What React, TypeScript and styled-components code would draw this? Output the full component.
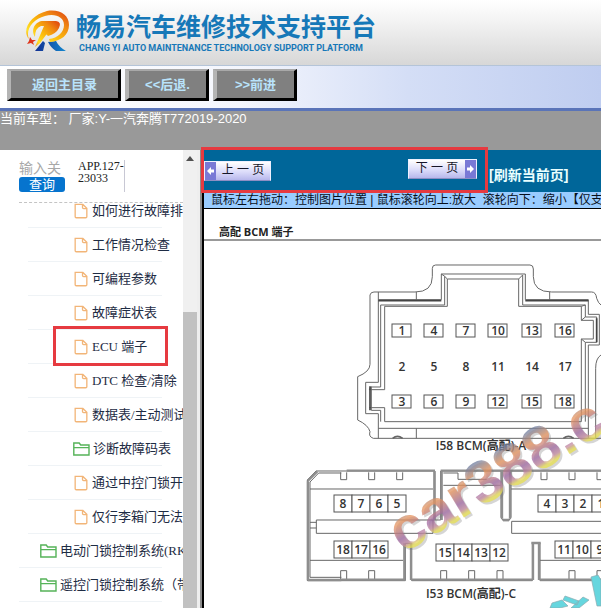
import React from "react";
import styled, { createGlobalStyle } from "styled-components";

const Global = createGlobalStyle`
  * { box-sizing: border-box; }
  body { margin: 0; background: #fff; overflow: hidden; }
  button, input { font: inherit; padding: 0; margin: 0; }
`;

const Page = styled.div`
  display: flex;
  flex-direction: column;
  height: 100vh;
  font-family: "Liberation Sans", "Noto Sans CJK SC", sans-serif;
`;

const Header = styled.header`
  display: flex;
  align-items: flex-start;
  gap: 6px;
  height: 65px;
  flex: none;
  padding: 10px 0 0 23px;
  background: linear-gradient(#ffffff, #f4f4f4 30%, #d7d7d7);
`;

const Brand = styled.div`
  color: #1678b8;
  white-space: nowrap;
`;

const BrandName = styled.h1`
  margin: 0;
  font-family: "Noto Sans CJK SC", sans-serif;
  font-size: 25px;
  line-height: 30px;
  font-weight: 700;
`;

const BrandSub = styled.p`
  margin: 0 0 0 3px;
  font-family: Roboto, sans-serif;
  font-size: 9px;
  line-height: 16px;
  font-weight: 700;
`;

const Toolbar = styled.nav`
  display: flex;
  align-items: flex-start;
  gap: 4px;
  flex: none;
  height: 46px;
  padding: 3px 7px;
  border-top: 1px solid #b4c4d8;
  border-bottom: 3px solid #5a74b8;
  background: linear-gradient(90deg, #ffffff, #f4f6fd 40%, #d4def6 68%, #bfcdf0);
`;

const ToolButton = styled.button<{ $wide?: boolean }>`
  width: ${(p) => (p.$wide ? 114 : 84)}px;
  height: 32px;
  padding-bottom: 2px;
  border: solid;
  border-width: 2px 3px 3px 4px;
  border-color: #a8a8a8 #000 #000 #b4b4b4;
  background: #808080;
  color: #b9e3fb;
  font-size: 13px;
  font-weight: 700;
`;

const Status = styled.div`
  flex: none;
  height: 39px;
  background: #999;
  color: #fff;
  font-size: 13px;
  line-height: 15px;
  white-space: pre;
`;

const Body = styled.div`
  display: flex;
  flex: 1;
  min-height: 0;
`;

const Sidebar = styled.aside`
  position: relative;
  display: flex;
  flex: none;
  width: 204px;
  font-family: "Liberation Serif", "Noto Sans CJK SC", serif;
`;

const SideContent = styled.div`
  display: flex;
  flex-direction: column;
  width: 183px;
  overflow: hidden;
`;

const Search = styled.form`
  display: flex;
  gap: 13px;
  flex: none;
  height: 53px;
  margin-left: 19px;
  padding-top: 10px;
  border-bottom: 1px dashed #c4c4c4;
`;

const SearchFields = styled.div`
  display: flex;
  flex-direction: column;
  width: 46px;
`;

const SearchInput = styled.input`
  width: 46px;
  height: 17px;
  border: 0;
  outline: 0;
  background: transparent;
  font-size: 14px;
  &::placeholder { color: #a8a8a8; opacity: 1; }
`;

const SearchButton = styled.button`
  height: 15px;
  border: 0;
  border-radius: 3px;
  background: #0674ce;
  color: #fff;
  font-size: 13px;
  line-height: 15px;
`;

const Code = styled.div`
  width: 47px;
  height: 32px;
  border-right: 1px solid #c8c8d4;
  color: #222;
  font-size: 12px;
  line-height: 12px;
`;

const Tree = styled.ul`
  flex: 1;
  min-height: 0;
  margin: 0;
  padding: 0;
  overflow: hidden;
  list-style: none;
`;

const TreeRow = styled.li<{ $level: number; $cut?: boolean }>`
  height: ${(p) => (p.$cut ? 25 : 34)}px;
  margin-left: ${(p) => (p.$level === 3 ? 28 : 19)}px;
  margin-right: 21px;
  padding-left: ${(p) => (p.$level === 3 ? 45 : 21)}px;
  padding-top: ${(p) => (p.$cut ? 0 : 9)}px;
  border-bottom: 1px solid #eff3f6;
`;

const TreeLink = styled.a`
  display: flex;
  align-items: center;
  gap: 3px;
  height: 16px;
  color: #1e2c44;
  font-size: 13px;
  line-height: 16px;
  white-space: nowrap;
  text-decoration: none;
  svg { flex: none; }
`;

const Scrollbar = styled.div`
  display: flex;
  flex-direction: column;
  align-items: center;
  width: 14px;
  background: #f0f0f0;
`;

const ScrollUp = styled.button`
  display: flex;
  width: 14px;
  height: 17px;
  border: 0;
  align-items: center;
  justify-content: center;
  background: none;
`;

const Thumb = styled.div`
  flex: 1;
  width: 14px;
  margin-top: 145px;
  background: #c1c1c1;
`;

const Divider = styled.div`
  flex: 1;
  border: solid;
  border-width: 0 2px 0 0;
  border-color: #000;
  background: linear-gradient(90deg, #eeeeee 60%, #8c8c8c 60%);
`;

const Marker = styled.div<{ $kind: "row" | "pager" }>`
  position: absolute;
  border: 3px solid #e63a40;
  pointer-events: none;
  ${(p) =>
    p.$kind === "row"
      ? "left: 53px; top: 176px; width: 115px; height: 40px;"
      : "left: -3px; top: -3px; width: 287px; height: 46px;"}
`;

const Main = styled.main`
  position: relative;
  display: flex;
  flex-direction: column;
  flex: 1;
  min-width: 0;
  background: #fff;
`;

const Pager = styled.div`
  display: flex;
  align-items: flex-start;
  flex: none;
  height: 42px;
  background: #006699;
`;

const PageButton = styled.button<{ $next?: boolean }>`
  display: flex;
  align-items: center;
  justify-content: space-between;
  flex-direction: ${(p) => (p.$next ? "row-reverse" : "row")};
  width: ${(p) => (p.$next ? 69 : 67)}px;
  height: 20px;
  margin-top: ${(p) => (p.$next ? 9 : 11)}px;
  margin-left: ${(p) => (p.$next ? 137 : 0)}px;
  border: 1px solid #eef0ff;
  border-bottom-color: #8d8fc4;
  background: linear-gradient(#ffffff, #dcdcfa 55%, #b8b8ec);
  color: #161628;
  font-size: 12px;
  line-height: 16px;
  span { flex: 1; padding-bottom: 2px; text-align: center; white-space: pre; }
`;

const Refresh = styled.a`
  margin: 17px 0 0 12px;
  color: #eaffff;
  font-size: 14px;
  line-height: 16px;
  font-weight: 700;
  text-decoration: none;
  white-space: nowrap;
`;

const Hint = styled.p`
  flex: none;
  height: 17px;
  margin: 0;
  padding-left: 7px;
  overflow: hidden;
  border-bottom: 1px solid #000;
  background: #99ccff;
  color: #08101c;
  font-size: 12px;
  line-height: 16px;
  white-space: pre;
`;

const Title = styled.h2`
  flex: none;
  height: 32px;
  margin: 0;
  padding: 15px 0 0 15px;
  border-bottom: 2px solid #999;
  color: #222;
  font-family: "Open Sans", "Noto Sans CJK SC", sans-serif;
  font-size: 11px;
  line-height: 16px;
`;

const Viewer = styled.div`
  flex: 1;
  min-height: 0;
  overflow: hidden;
  svg { display: block; }
`;

const FileIcon = () => (
  <svg width="16" height="16" viewBox="0 0 16 17" fill="none" stroke="#f2b578" strokeWidth="1.4">
    <path d="M2 1.5h8l4.2 4.2v8.8q0 1.2-1.2 1.2H3q-1.2 0-1.2-1.2V1.5zM9.6 1.8v3q0 1.2 1.2 1.2H14" />
  </svg>
);

const FolderIcon = () => (
  <svg width="17" height="16" viewBox="0 0 17 16" fill="none" stroke="#55b358" strokeWidth="1.4">
    <path d="M.8 14V2H6.2l1.5 2h8.3v10zM1 6.6h15" />
  </svg>
);

const Logo = () => (
  <svg width="47" height="42" viewBox="0 0 47 42" role="img" aria-label="畅易">
    <defs>
      <linearGradient id="fire" x1="1" y1="0" x2="0" y2="1">
        <stop offset="0" stopColor="#dd3d10" />
        <stop offset=".3" stopColor="#f08a12" />
        <stop offset=".55" stopColor="#fbb90c" />
        <stop offset=".8" stopColor="#ffe128" />
        <stop offset="1" stopColor="#f08a16" />
      </linearGradient>
      <linearGradient id="sea" x1="0" y1="0" x2="1" y2="0">
        <stop offset="0" stopColor="#122f91" />
        <stop offset="1" stopColor="#1388cf" />
      </linearGradient>
    </defs>
    <path d="M20 31 22 33 20 41H12zM25 32 33 31Q36 37 43 41H33Q28 38 25 32z" fill="url(#sea)" />
    <path d="M6 29C-2 20 8 5 24 1C37-1 46 5 46 15C46 25 38 31 27 32L26 29C35 28 41 22 41 15C41 7 32 3 22 6C10 9 2 20 6 29z" fill="url(#fire)" />
    <path d="M12 27C7 19 13 11 20 11H33Q39 12 36 18Q33 24 25 26L23 24 29 17 17 33 12 37 21 16H18Q12 18 12 27z" fill="url(#fire)" />
    <path d="M7 27 9 30 13 30 10 32 11 35 8 33 4 34 6 31z" fill="#df351a" />
  </svg>
);

const Arrow = ({ next }: { next?: boolean }) => (
  <svg width="11" height="18" viewBox="0 0 11 18">
    <path d="M0 0h11v18H0z" fill="#7979d6" />
    <path d={next ? "M2 7.5h3V5l4 4-4 4v-2.500H2z" : "M9 7.500H6V5L2 9l4 4v-2.500h3z"} fill="#fff" />
  </svg>
);

const pinColumns = [402, 434, 466, 498, 532, 565];
const pinRows = [331, 367, 402];

const strips = [
  { x: 334, y: 495, pins: [8, 7, 6, 5] },
  { x: 334, y: 541, pins: [18, 17, 16] },
  { x: 436, y: 544, pins: [15, 14, 13, 12] },
  { x: 538, y: 495, pins: [4, 3, 2, 1] },
  { x: 555, y: 541, pins: [11, 10, 9] },
];

const Diagram = () => (
  <svg width="397" height="367" viewBox="204 241 397 367" fontFamily="Open Sans, Noto Sans CJK SC, sans-serif" fontSize="12" fill="#333" fontWeight="600" textAnchor="middle">
    <defs>
      <linearGradient id="mark" x1="0" y1="0" x2="0" y2="1">
        <stop offset=".2" stopColor="#7480a0" />
        <stop offset=".38" stopColor="#e9965f" />
        <stop offset=".6" stopColor="#a06aa4" />
        <stop offset=".7" stopColor="#c58ba2" />
        <stop offset=".77" stopColor="#e8e050" />
      </linearGradient>
    </defs>
    <g transform="translate(300 255) scale(.33333)" fill="none" stroke="#666" strokeWidth="3">
      <path d="M903 550H220Q205 545 210 530Q205 510 173 495V365Q210 350 210 328V120Q212 111 222 111H345Q397 111 397 65V40Q397 30 407 30H690Q700 30 700 42V65Q700 111 755 111H875Q888 111 890 130Q895 145 903 150" />
      <path d="M235 111V382H197V476H235V550M235 134H424V57H676V134H865V178H898V270H865V550M349 111V134M749 111V134M349 520V550M887 550V340Q887 310 903 300" />
      <path d="M242 150H434V64L442 72V154H254V404H208L214 394M254 458H208M254 458V500H844V252H880V196H844V154H656V72L668 60V150H856V186H890V262H856V500" />
      <path d="M242 150V396H214V466H242V500M442 72H656M424 57L434 64M235 520H865M844 154L856 150M844 196L856 186M844 252L856 262" />
      <path d="M210 394V466M890 190V262M235 137H424M676 137H865" strokeWidth="5" stroke="#444" />
      <path d="M278 550Q292 538 308 550M790 550Q805 538 821 550" strokeWidth="5" />
    </g>
    {pinRows.map((y, r) =>
      pinColumns.map((x, c) => (
        <g key={x + "-" + y}>
          {r !== 1 && <rect x={x - 10} y={y - 7} width="19" height="13" fill="none" stroke="#555" />}
          <text x={x} y={y + 4}>{c * 3 + r + 1}</text>
        </g>
      ))
    )}
    <g transform="translate(300 440) scale(.33333)" fill="none" stroke="#666" strokeWidth="3">
      <path d="M48 93H405V240M22 120V422H316V310H335V422H697V308H720V422H903M22 120L48 93M30 126L56 99H124M30 126V412H124M30 147H399M30 361H310M30 247H49M30 264H49M399 240H49V280H399V240M422 93V240H399M422 93H903M430 99H474V118H560M430 136H603M603 93V232L609 242H627L633 232V93M633 147H903M903 244H635V280H903M720 361H903" />
      <path d="M122 97V119H140V97M206 97V119H224V97M290 97V119H308V97M723 97V119H741V97M807 97V119H825V97M891 97V119H903M122 420V392H140V420M206 420V392H224V420M422 420V392H440V420M506 420V392H524V420M591 420V392H609V420M807 420V392H825V420M891 420V392H903" />
      <path d="M140 92H405M422 92H903M24 124V420M24 420H124M124 419H316M335 419H697M720 419H903M403 94V240M425 94V240M606 94V236M630 94V236M313 310V420M333 310V420M699 312V420M717 312V420M24 122L52 94M694 309H722M609 240H627" strokeWidth="7" stroke="#8e8e8e" />
    </g>
    {strips.map((s) => (
      <g key={s.x + "-" + s.y}>
        {s.pins.map((n, i) => (
          <g key={n}>
            <rect x={s.x + i * 18} y={s.y} width="18" height="17" fill="#fff" stroke="#555" />
            <text x={s.x + i * 18 + 9} y={s.y + 13}>{n}</text>
          </g>
        ))}
      </g>
    ))}
    <text x="481" y="450">I58 BCM(高配)-A</text>
    <text x="471" y="598">I53 BCM(高配)-C</text>
    <g fontFamily="Liberation Sans, sans-serif" fontSize="60" fontWeight="700" textAnchor="start">
      <text transform="translate(405 556) rotate(-31)" fill="#777" opacity=".3">car388.c</text>
      <text transform="translate(403 554) rotate(-31)" fill="url(#mark)" opacity=".75">car388.c</text>
    </g>
    <path d="M591 577 598 575 601 580V606H597zM565 596 579 601 577 605 563 600zM583 597 589 600 579 608H571zM552 603 562 600 568 606 560 608H550z" fill="#66d6de" stroke="#8baab0" strokeWidth=".7" />
  </svg>
);

const items = [
  { text: "如何进行故障排", level: 3 },
  { text: "工作情况检查", level: 3 },
  { text: "可编程参数", level: 3 },
  { text: "故障症状表", level: 3 },
  { text: "ECU 端子", level: 3 },
  { text: "DTC 检查/清除", level: 3 },
  { text: "数据表/主动测试", level: 3 },
  { text: "诊断故障码表", level: 3, folder: true },
  { text: "通过中控门锁开", level: 3 },
  { text: "仅行李箱门无法", level: 3 },
  { text: "电动门锁控制系统(RK", level: 2, folder: true },
  { text: "遥控门锁控制系统（带", level: 2, folder: true },
];

export default function App() {
  return (
    <Page>
      <Global />
      <Header>
        <Logo />
        <Brand>
          <BrandName>畅易汽车维修技术支持平台</BrandName>
          <BrandSub>CHANG YI AUTO MAINTENANCE TECHNOLOGY SUPPORT PLATFORM</BrandSub>
        </Brand>
      </Header>
      <Toolbar>
        <ToolButton $wide>返回主目录</ToolButton>
        <ToolButton>&lt;&lt;后退.</ToolButton>
        <ToolButton>&gt;&gt;前进</ToolButton>
      </Toolbar>
      <Status>当前车型： 厂家:Y-一汽奔腾T772019-2020</Status>
      <Body>
        <Sidebar>
          <SideContent>
            <Search onSubmit={(e) => e.preventDefault()}>
              <SearchFields>
                <SearchInput aria-label="输入关键字" placeholder="输入关" />
                <SearchButton>查询</SearchButton>
              </SearchFields>
              <Code>APP.127-23033</Code>
            </Search>
            <Tree>
              {items.map((it, i) => (
                <TreeRow key={it.text} $level={it.level} $cut={i === 0}>
                  <TreeLink href="#">
                    {it.folder ? <FolderIcon /> : <FileIcon />}
                    {it.text}
                  </TreeLink>
                </TreeRow>
              ))}
            </Tree>
          </SideContent>
          <Scrollbar>
            <ScrollUp aria-label="向上滚动">
              <svg width="8" height="5" viewBox="0 0 8 5"><path d="M0 5 4 0l4 5z" fill="#505050" /></svg>
            </ScrollUp>
            <Thumb />
          </Scrollbar>
          <Divider />
          <Marker $kind="row" />
        </Sidebar>
        <Main>
          <Pager>
            <PageButton><Arrow /><span>上 一 页</span></PageButton>
            <PageButton $next><Arrow next /><span>下 一 页</span></PageButton>
            <Refresh href="#">[刷新当前页]</Refresh>
          </Pager>
          <Hint>鼠标左右拖动：控制图片位置 | 鼠标滚轮向上:放大  滚轮向下：缩小【仅支</Hint>
          <Title>高配 BCM 端子</Title>
          <Viewer><Diagram /></Viewer>
          <Marker $kind="pager" />
        </Main>
      </Body>
    </Page>
  );
}
